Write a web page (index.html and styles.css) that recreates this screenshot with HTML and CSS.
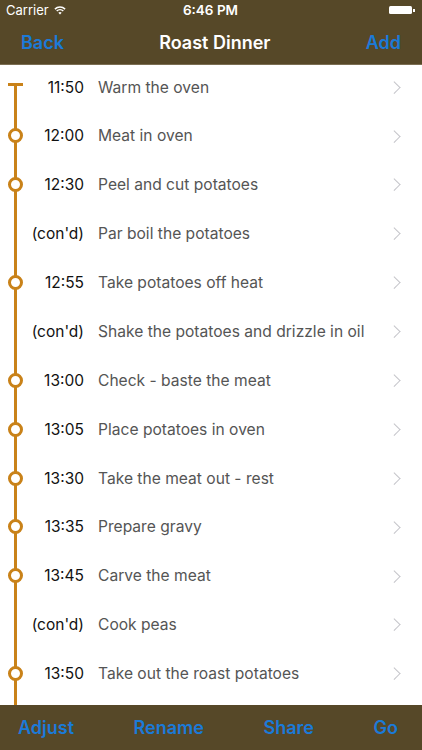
FILE: index.html
```html
<!DOCTYPE html>
<html lang="en">
<head>
  <meta charset="UTF-8" />
  <meta name="viewport" content="width=device-width, initial-scale=1.0"/>
  <title>Roast Dinner</title>

  <link rel="stylesheet" href="styles.css">

</head>
<body>
  <div class="app">
    <div class="status-bar">
      <div class="carrier">
        Carrier
        <svg class="wifi" width="12" height="9" viewBox="0 0 12 9">
          <path d="M6 8.6 L4.3 6.7 A2.5 2.5 0 0 1 7.7 6.7 Z" fill="#fff"/>
          <path d="M2.7 5 A4.8 4.8 0 0 1 9.3 5" stroke="#fff" stroke-width="1.5" fill="none"/>
          <path d="M0.9 3.1 A7.4 7.4 0 0 1 11.1 3.1" stroke="#fff" stroke-width="1.5" fill="none"/>
        </svg>
      </div>
      <div class="clock">6:46 PM</div>
      <div class="battery"><span class="battery-body"></span><span class="battery-nub"></span></div>
    </div>

    <div class="nav-bar">
      <button class="nav-btn">Back</button>
      <h1>Roast Dinner</h1>
      <button class="nav-btn">Add</button>
    </div>

    <ul class="steps">
      <li class="step first">
        <div class="rail"><span class="cap"></span></div>
        <span class="time">11:50</span>
        <span class="desc">Warm the oven</span>
        <span class="chevron"></span>
      </li>
      <li class="step">
        <div class="rail"><span class="dot"></span></div>
        <span class="time">12:00</span>
        <span class="desc">Meat in oven</span>
        <span class="chevron"></span>
      </li>
      <li class="step">
        <div class="rail"><span class="dot"></span></div>
        <span class="time">12:30</span>
        <span class="desc">Peel and cut potatoes</span>
        <span class="chevron"></span>
      </li>
      <li class="step">
        <div class="rail"></div>
        <span class="time">(con'd)</span>
        <span class="desc">Par boil the potatoes</span>
        <span class="chevron"></span>
      </li>
      <li class="step">
        <div class="rail"><span class="dot"></span></div>
        <span class="time">12:55</span>
        <span class="desc">Take potatoes off heat</span>
        <span class="chevron"></span>
      </li>
      <li class="step">
        <div class="rail"></div>
        <span class="time">(con'd)</span>
        <span class="desc">Shake the potatoes and drizzle in oil</span>
        <span class="chevron"></span>
      </li>
      <li class="step">
        <div class="rail"><span class="dot"></span></div>
        <span class="time">13:00</span>
        <span class="desc">Check - baste the meat</span>
        <span class="chevron"></span>
      </li>
      <li class="step">
        <div class="rail"><span class="dot"></span></div>
        <span class="time">13:05</span>
        <span class="desc">Place potatoes in oven</span>
        <span class="chevron"></span>
      </li>
      <li class="step">
        <div class="rail"><span class="dot"></span></div>
        <span class="time">13:30</span>
        <span class="desc">Take the meat out - rest</span>
        <span class="chevron"></span>
      </li>
      <li class="step">
        <div class="rail"><span class="dot"></span></div>
        <span class="time">13:35</span>
        <span class="desc">Prepare gravy</span>
        <span class="chevron"></span>
      </li>
      <li class="step">
        <div class="rail"><span class="dot"></span></div>
        <span class="time">13:45</span>
        <span class="desc">Carve the meat</span>
        <span class="chevron"></span>
      </li>
      <li class="step">
        <div class="rail"></div>
        <span class="time">(con'd)</span>
        <span class="desc">Cook peas</span>
        <span class="chevron"></span>
      </li>
      <li class="step">
        <div class="rail"><span class="dot"></span></div>
        <span class="time">13:50</span>
        <span class="desc">Take out the roast potatoes</span>
        <span class="chevron"></span>
      </li>
    </ul>

    <div class="toolbar">
      <button class="tool-btn">Adjust</button>
      <button class="tool-btn">Rename</button>
      <button class="tool-btn">Share</button>
      <button class="tool-btn">Go</button>
    </div>
  </div>
</body>
</html>
```

FILE: styles.css
```css
* {
  box-sizing: border-box;
}

body {
  margin: 0;
  font-family: Inter, "Liberation Sans", sans-serif;
  background: #fff;
}

.app {
  width: 422px;
  height: 750px;
  display: flex;
  flex-direction: column;
  overflow: hidden;
}

/* status bar + nav share the same brown */
.status-bar {
  height: 20px;
  background: #564828;
  color: #fff;
  display: flex;
  align-items: center;
  justify-content: space-between;
  padding: 0 7px 0 6px;
  font-size: 13px;
}

.carrier {
  display: flex;
  align-items: center;
  gap: 5px;
  width: 80px;
}

.clock {
  font-weight: 600;
  font-size: 13.5px;
}

.battery {
  width: 80px;
  display: flex;
  justify-content: flex-end;
  align-items: center;
}

.battery-body {
  width: 23px;
  height: 8px;
  background: #fff;
  border-radius: 1.5px;
}

.battery-nub {
  width: 1.5px;
  height: 3px;
  background: #fff;
  margin-left: 1px;
}

.nav-bar {
  height: 45px;
  background: #564828;
  border-bottom: 1px solid #7b6e52;
  display: flex;
  align-items: center;
  justify-content: space-between;
  padding: 0 21px 0 21px;
}

.nav-bar h1 {
  margin: 0;
  color: #fff;
  font-size: 18px;
  font-weight: 600;
}

.nav-btn,
.tool-btn {
  background: none;
  border: none;
  padding: 0;
  font-family: inherit;
  font-size: 18px;
  font-weight: 600;
  color: #1b7ad8;
  cursor: pointer;
}

.steps {
  list-style: none;
  margin: 0;
  padding: 1px 0 0;
  flex: 1;
  background: linear-gradient(#c98219, #c98219) no-repeat 14px 18px / 3px 100%;
}

.step {
  height: 48.9px;
  display: flex;
  align-items: center;
  padding-right: 21px;
}

.step.first {
  height: 45.4px;
  padding-bottom: 3.4px;
}

.rail {
  width: 31px;
  height: 100%;
  display: flex;
  justify-content: center;
  align-items: center;
  flex-shrink: 0;
}

.dot {
  width: 15px;
  height: 15px;
  border: 3.5px solid #c98219;
  border-radius: 50%;
  background: #fff;
}

.cap {
  width: 15px;
  height: 3px;
  background: #c98219;
  align-self: flex-start;
  margin-top: 17px;
}

.time {
  width: 53px;
  text-align: right;
  font-size: 15.5px;
  color: #111;
  flex-shrink: 0;
}

.desc {
  flex: 1;
  margin-left: 14px;
  font-size: 15.6px;
  color: #555;
  white-space: nowrap;
}

.chevron {
  width: 8.5px;
  height: 8.5px;
  border-top: 1.5px solid #c4c4c9;
  border-right: 1.5px solid #c4c4c9;
  transform: rotate(45deg);
  margin-right: 3px;
}

.toolbar {
  height: 45px;
  background: #564828;
  display: flex;
  align-items: center;
  justify-content: space-between;
  padding: 0 24px 0 18px;
}
```
